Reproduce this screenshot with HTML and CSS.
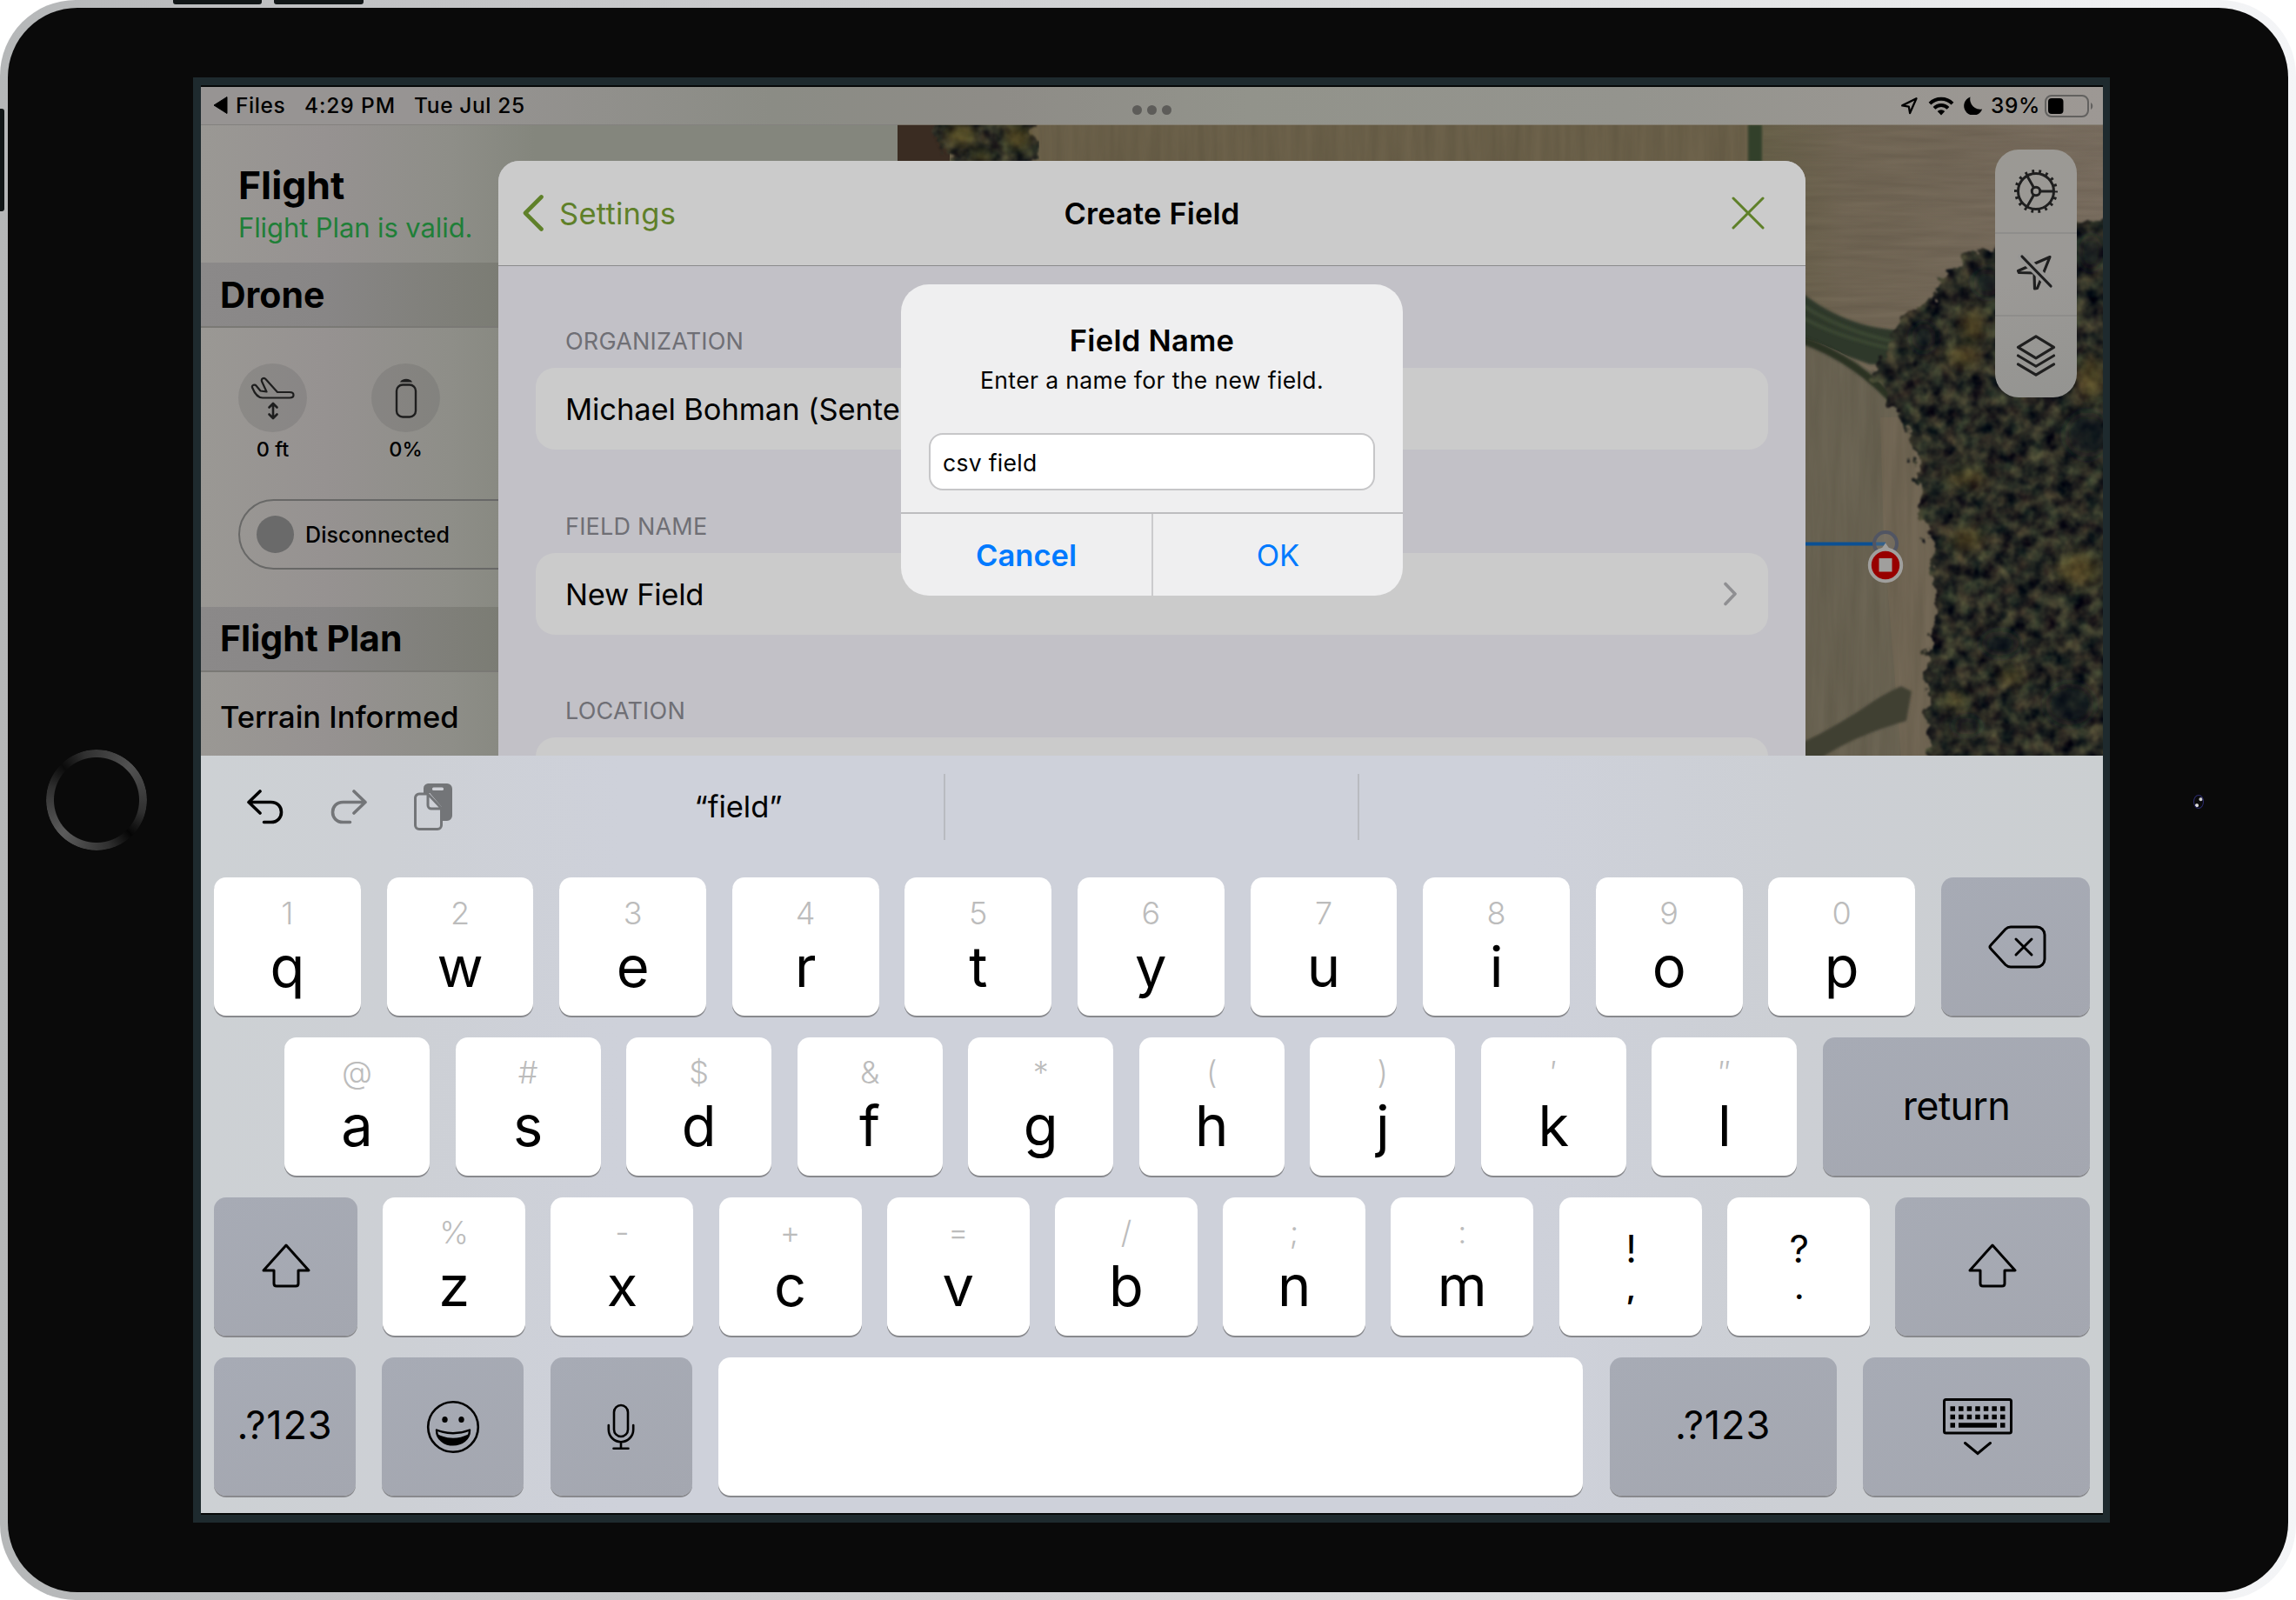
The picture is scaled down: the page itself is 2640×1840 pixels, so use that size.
FILE: index.html
```html
<!DOCTYPE html>
<html lang="en">
<head>
<meta charset="utf-8">
<title>Create Field</title>
<link rel="stylesheet" href="styles.css">
</head>
<body>
<div class="device">
  <i class="hw hw-top-a"></i><i class="hw hw-top-b"></i><i class="hw hw-left"></i>
  <div class="face">
    <div class="home"></div>
    <div class="bezel">
      <main class="screen">
        <header class="status">
          <div class="status-left">
            <svg width="17" height="22" viewBox="0 0 17 22"><path d="M16 1.5v19L1 11z" fill="#000" stroke="#000" stroke-linejoin="round"/></svg>
            <span class="t-files">Files</span><span class="t-time">4:29 PM</span><span class="t-date">Tue Jul 25</span>
          </div>
          <div class="status-dots"><i></i><i></i><i></i></div>
          <div class="status-right">
            <svg width="21" height="21" viewBox="0 0 21 21"><path d="M18.5 2.2 2.2 10.4l7.6 1.2 1.3 7.4z" fill="none" stroke="#000" stroke-width="2.3" stroke-linejoin="round"/></svg>
            <svg width="30" height="22" viewBox="0 0 30 22"><g fill="none" stroke="#000" stroke-width="4"><path d="M2 8.2a18.5 18.5 0 0 1 26 0"/><path d="M7 13.3a11.4 11.4 0 0 1 16 0"/></g><path d="m15 21.5-4.3-4.5a6.2 6.2 0 0 1 8.6 0z"/></svg>
            <svg width="22" height="21" viewBox="0 0 22 21"><path d="M7.5.6a11.6 11.6 0 0 0 13.7 13.8A10.8 10.8 0 1 1 7.5.6z"/></svg>
            <span>39%</span>
            <svg class="batt" width="56" height="26" viewBox="0 0 56 26"><rect x="1" y="1" width="49" height="24" rx="7" fill="none" stroke="#62615f" stroke-width="2"/><rect x="4" y="4" width="17.500" height="18" rx="4"/><path d="M53 9v8c3-1.500 3-6.500 0-8z" fill="#62615f"/></svg>
          </div>
        </header>

        <section class="stage">
          <aside class="sidebar">
            <div class="side-head">
              <h1>Flight</h1>
              <p>Flight Plan is valid.</p>
            </div>
            <h2 class="band band-drone">Drone</h2>
            <div class="gauges">
              <div class="gauge">
                <span class="disc">
                  <svg width="52" height="50" viewBox="0 0 52 50" fill="none" stroke="#1e1e1e" stroke-width="2.200" stroke-linejoin="round" stroke-linecap="round"><path d="M2 12.500c-.8-2.500 3-4 4.500-2l5 6 7 1-5.500-12c-1-3 2.500-5 4.500-2.500l13.500 15H45c6 0 6 6.500 0 6.500H14c-5 0-9-4.500-12-12z"/><path d="M26 32v15M21.500 35.500 26 31l4.500 4.500M21.500 43.500 26 48l4.500-4.500" stroke-width="2.600"/></svg>
                </span>
                <span>0 ft</span>
              </div>
              <div class="gauge">
                <span class="disc">
                  <svg width="26" height="46" viewBox="0 0 26 46"><path d="M6 4.500C8 -.500 18 -.500 20 4.500z" fill="#1e1e1e"/><rect x="2" y="7.500" width="22" height="37" rx="7" fill="none" stroke="#1e1e1e" stroke-width="2.400"/></svg>
                </span>
                <span>0%</span>
              </div>
            </div>
            <div class="pill"><i></i><span>Disconnected</span></div>
            <h2 class="band band-plan">Flight Plan</h2>
            <p class="terrain">Terrain Informed</p>
          </aside>

          <div class="map">
            <svg class="imagery" viewBox="1032 143 1386 726" width="1386" height="726">
              <defs>
                <filter id="canopy" x="-5%" y="-5%" width="110%" height="110%" color-interpolation-filters="sRGB">
                  <feTurbulence type="fractalNoise" baseFrequency=".06" numOctaves="4" seed="8" result="n"/>
                  <feColorMatrix in="n" values=".5 .1 0 0 -.145  .48 .02 .06 0 -.12  .26 .02 .04 0 -.025  0 0 0 0 1" result="c"/>
                  <feTurbulence type="fractalNoise" baseFrequency=".07" numOctaves="3" seed="3" result="m"/>
                  <feDisplacementMap in="SourceGraphic" in2="m" scale="26" xChannelSelector="R" yChannelSelector="G" result="shape"/>
                  <feComposite in="c" in2="shape" operator="in" result="t"/>
                  <feGaussianBlur in="t" stdDeviation="1.200"/>
                </filter>
                <filter id="soil" x="0" y="0" width="100%" height="100%" color-interpolation-filters="sRGB">
                  <feTurbulence type="fractalNoise" baseFrequency=".01 .12" numOctaves="3" seed="5"/>
                  <feColorMatrix values="0 0 0 0 .2  0 0 0 0 .17  0 0 0 0 .13  .25 0 0 0 -.06"/>
                  <feComposite in2="SourceGraphic" operator="in"/>
                </filter>
                <filter id="rows" x="0" y="0" width="100%" height="100%" color-interpolation-filters="sRGB">
                  <feTurbulence type="fractalNoise" baseFrequency=".08 .007" numOctaves="3" seed="9"/>
                  <feColorMatrix values="0 0 0 0 .2  0 0 0 0 .19  0 0 0 0 .13  .28 0 0 0 -.07"/>
                  <feComposite in2="SourceGraphic" operator="in"/>
                </filter>
                <filter id="soft" x="-50%" y="-50%" width="200%" height="200%"><feGaussianBlur stdDeviation="7"/></filter>
                <filter id="edge" x="-10%" y="-10%" width="120%" height="120%"><feGaussianBlur stdDeviation="1.500"/></filter>
                <linearGradient id="tan" x1="0" x2="1"><stop offset="0" stop-color="#686149"/><stop offset=".25" stop-color="#726755"/><stop offset="1" stop-color="#7b6f61"/></linearGradient>
              </defs>
              <rect x="1032" y="143" width="1386" height="726" fill="#6d624b"/>
              <rect x="1185" y="143" width="830" height="60" filter="url(#rows)"/>
              <rect x="1032" y="143" width="60" height="60" fill="#3a2c22"/>
              <path d="M1074 120h115v90h-85c-4-24-30-40-30-90z" filter="url(#canopy)"/>
              <g fill="#6b5c24" opacity=".6" filter="url(#soft)"><ellipse cx="1105" cy="155" rx="18" ry="12"/><ellipse cx="1170" cy="158" rx="14" ry="14"/><ellipse cx="1128" cy="180" rx="10" ry="8"/></g>
              <rect x="2018" y="143" width="400" height="300" fill="url(#tan)"/>
              <rect x="2028" y="143" width="390" height="245" filter="url(#soil)"/>
              <rect x="2010" y="143" width="16" height="60" fill="#33402a" filter="url(#edge)"/>
              <path d="M2070 335c40 32 80 46 140 46v38h-60l-80-28z" fill="#2f3829" filter="url(#edge)"/>
              <path d="M2074 352c40 26 80 36 124 46M2074 366c40 22 80 30 122 40" fill="none" stroke="#3b4631" stroke-width="4" filter="url(#edge)"/>
              <path d="M2070 388c50 12 88 42 124 74 24 30 30 70 46 108v299h-170z" fill="#6c6554"/>
              <path d="M2162 480l4 140 12 150 8 99h60v-110l10-100-14-90-26-90z" fill="#766956" opacity=".8"/>
              <path d="M2070 388c50 12 88 42 124 74 24 30 30 70 46 108v299h-170z" filter="url(#rows)"/>
              <path d="M2070 390c50 18 82 44 110 74" fill="none" stroke="#2b3124" stroke-width="9" filter="url(#edge)"/>
              <path d="M2070 855c30-14 60-32 80-46q18-12 36-20l12 6-6 34c-20 6-60 18-97 42h-25z" fill="#403f33" filter="url(#edge)"/>
              <path d="M2176 392l12-32 34-14 18-36 28-20 104-6 10-32h66v640h-222l-10-60-2-64 12-70-6-70-14-60-10-70-44-66z" filter="url(#canopy)"/>
              <g fill="#8a702c" opacity=".4" filter="url(#soft)"><ellipse cx="2268" cy="375" rx="14" ry="18"/><ellipse cx="2258" cy="410" rx="20" ry="12"/><ellipse cx="2404" cy="435" rx="16" ry="24"/><ellipse cx="2312" cy="778" rx="14" ry="9"/><ellipse cx="2248" cy="805" rx="14" ry="8"/><ellipse cx="2390" cy="655" rx="24" ry="18"/><ellipse cx="2262" cy="550" rx="22" ry="9"/><ellipse cx="2262" cy="620" rx="18" ry="12"/></g>
              <g fill="#0c151c" opacity=".6" filter="url(#soft)"><ellipse cx="2400" cy="500" rx="26" ry="26"/><ellipse cx="2212" cy="388" rx="14" ry="16"/><ellipse cx="2285" cy="325" rx="16" ry="16"/><ellipse cx="2404" cy="290" rx="14" ry="20"/><ellipse cx="2380" cy="810" rx="28" ry="24"/><ellipse cx="2300" cy="740" rx="22" ry="14"/><ellipse cx="2262" cy="835" rx="16" ry="10"/></g>
              <path d="M1032 143h1386" stroke="#8f8b80" stroke-width="1.500"/>
              <path d="M2070 625.500h98" stroke="#0b5093" stroke-width="4"/>
              <circle cx="2168" cy="625" r="13" fill="#85817c" fill-opacity=".35" stroke="#515563" stroke-width="4"/>
              <path d="M2168 624.500l7 10h-14z" fill="#a09f9d"/>
              <circle cx="2168" cy="650" r="18.200" fill="#980000" stroke="#a09f9d" stroke-width="4"/>
              <rect x="2160.500" y="642" width="15" height="15.500" fill="#a09f9d"/>
            </svg>
            <nav class="tools">
              <span><svg width="52" height="52" viewBox="-26 -26 52 52" fill="none" stroke="#1f1f1f" stroke-width="3"><circle r="20.500"/><circle r="23" stroke-width="4" stroke-dasharray="2.800 5.228" stroke-dashoffset="1.400"/><circle r="4.700"/><path d="M5 0h15M-2.500-4.300-10.500-18.200M-2.500 4.300-10.500 18.200"/></svg></span>
              <span><svg width="44" height="44" viewBox="-2 -2 44 44" fill="none" stroke="#1f1f1f" stroke-width="3.200" stroke-linejoin="round" stroke-linecap="round"><path d="M38 1.500 1.500 17.500l1 2 17.500.5.500 18 3-.5z"/><path d="M6 1l34 34" stroke="#989795" stroke-width="10"/><path d="M6 1l33 34"/></svg></span>
              <span><svg width="48" height="50" viewBox="-3 -3 48 51" fill="none" stroke="#1f1f1f" stroke-width="3.200" stroke-linejoin="round" stroke-linecap="round"><path d="M21 0l21 12.700-21 12.700L0 12.700z"/><path d="M0 22.500l21 12.500 21-12.500"/><path d="M0 32.500l21 12.500 21-12.500"/></svg></span>
            </nav>
          </div>

          <section class="sheet">
            <header>
              <a class="back"><svg width="24" height="42" viewBox="0 0 24 42"><path d="M21.500 2.500 3 21l18.500 18.500" fill="none" stroke="#5f8029" stroke-width="4.600" stroke-linecap="round" stroke-linejoin="round"/></svg><span>Settings</span></a>
              <h3>Create Field</h3>
              <svg class="close" width="38" height="38" viewBox="0 0 38 38"><path d="M2 2l34 34M36 2 2 36" stroke="#5f8029" stroke-width="3" stroke-linecap="round"/></svg>
            </header>
            <div class="form">
              <label class="l-org">ORGANIZATION</label>
              <div class="card c-org"><span>Michael Bohman (Sentera)</span></div>
              <label class="l-name">FIELD NAME</label>
              <div class="card c-name"><span>New Field</span><svg width="17" height="28" viewBox="0 0 17 28"><path d="M3 2.500 14 14 3 25.500" fill="none" stroke="#8f8f92" stroke-width="3.600" stroke-linecap="round" stroke-linejoin="round"/></svg></div>
              <label class="l-loc">LOCATION</label>
              <div class="card"></div>
            </div>
          </section>

          <section class="alert">
            <h3>Field Name</h3>
            <p>Enter a name for the new field.</p>
            <div class="field">csv field</div>
            <div class="actions"><b>Cancel</b><span>OK</span></div>
          </section>
        </section>

        <section class="keyboard">
          <div class="suggest">
            <div class="edit">
              <svg width="42" height="40" viewBox="0 0 42 40" fill="none" stroke="#000" stroke-width="3.600" stroke-linecap="round" stroke-linejoin="round"><path d="M15 2 2 14.500 15 27M2.500 14.500h25c16 0 16 23 0 23h-8"/></svg>
              <svg width="42" height="40" viewBox="0 0 42 40" fill="none" stroke="#737578" stroke-width="3.600" stroke-linecap="round" stroke-linejoin="round"><path d="M27 2l13 12.500L27 27M39.500 14.500h-25c-16 0-16 23 0 23h8"/></svg>
              <svg width="44" height="54" viewBox="0 0 44 54"><path d="M16 0h22a6 6 0 0 1 6 6v31a6 6 0 0 1-6 6h-6V27L18 11h-7V6a6 6 0 0 1 5-6z" fill="#737578"/><rect x="21" y="4.500" width="13" height="3.500" rx="1.500" fill="#cfd1d7"/><path d="M18 11v12.500a5 5 0 0 0 5 5h9z" fill="#cfd1d7"/><path d="M15 12H6a4.500 4.500 0 0 0-4.500 4.500V48A4.500 4.500 0 0 0 6 52.500h21a4.500 4.500 0 0 0 4.500-4.500V28.500L16 12v13a4 4 0 0 0 4 4h11.500" fill="none" stroke="#737578" stroke-width="3"/></svg>
            </div>
            <span class="word">“field”</span><span></span><span></span>
          </div>

          <div class="keys row1">
            <div class="key"><small>1</small><b>q</b></div><div class="key"><small>2</small><b>w</b></div><div class="key"><small>3</small><b>e</b></div><div class="key"><small>4</small><b>r</b></div><div class="key"><small>5</small><b>t</b></div><div class="key"><small>6</small><b>y</b></div><div class="key"><small>7</small><b>u</b></div><div class="key"><small>8</small><b>i</b></div><div class="key"><small>9</small><b>o</b></div><div class="key"><small>0</small><b>p</b></div>
            <div class="key dark delete"><svg width="68" height="50" viewBox="0 0 68 50" fill="none" stroke="#000" stroke-width="3" stroke-linejoin="round" stroke-linecap="round"><path d="M26 2h30a9 9 0 0 1 9 9v28a9 9 0 0 1-9 9H26q-3.500 0-6-2.500L3 27q-2-2 0-4L20 4.500Q22.500 2 26 2z"/><path d="M32 16l18 18M50 16 32 34"/></svg></div>
          </div>
          <div class="keys row2">
            <div class="key"><small>@</small><b>a</b></div><div class="key"><small>#</small><b>s</b></div><div class="key"><small>$</small><b>d</b></div><div class="key"><small>&amp;</small><b>f</b></div><div class="key"><small>*</small><b>g</b></div><div class="key"><small>(</small><b>h</b></div><div class="key"><small>)</small><b>j</b></div><div class="key"><small>′</small><b>k</b></div><div class="key"><small>″</small><b>l</b></div>
            <div class="key dark return"><span>return</span></div>
          </div>
          <div class="keys row3">
            <div class="key dark shift-l"><svg width="58" height="52" viewBox="0 0 58 52"><path d="M29 3 55 32H43v15q0 3-3 3H18q-3 0-3-3V32H3z" fill="none" stroke="#000" stroke-width="3" stroke-linejoin="round"/></svg></div>
            <div class="key"><small>%</small><b>z</b></div><div class="key"><small>-</small><b>x</b></div><div class="key"><small>+</small><b>c</b></div><div class="key"><small>=</small><b>v</b></div><div class="key"><small>/</small><b>b</b></div><div class="key"><small>;</small><b>n</b></div><div class="key"><small>:</small><b>m</b></div>
            <div class="key pair"><em>!</em><em>,</em></div><div class="key pair"><em>?</em><em>.</em></div>
            <div class="key dark shift-r"><svg width="58" height="52" viewBox="0 0 58 52"><path d="M29 3 55 32H43v15q0 3-3 3H18q-3 0-3-3V32H3z" fill="none" stroke="#000" stroke-width="3" stroke-linejoin="round"/></svg></div>
          </div>
          <div class="keys row4">
            <div class="key dark num"><span>.?123</span></div>
            <div class="key dark"><svg width="62" height="62" viewBox="-31 -31 62 62"><circle r="28.800" fill="none" stroke="#000" stroke-width="2.600"/><ellipse cx="-9.500" cy="-8.500" rx="3.200" ry="3.600"/><ellipse cx="9.500" cy="-8.500" rx="3.200" ry="3.600"/><path d="M-19 3.500Q0 11 19 3.500C19 26-19 26-19 3.500z" fill="#a6abb5" stroke="#000" stroke-width="2.400" stroke-linejoin="round"/><path d="M-17.500 8.500Q0 17 17.500 8.500C14 25-14 25-17.500 8.500z"/></svg></div>
            <div class="key dark"><svg width="32" height="54" viewBox="0 0 32 54" fill="none" stroke="#000" stroke-width="2.600" stroke-linecap="round"><rect x="8" y="2" width="16" height="36" rx="8"/><path d="M1.800 25v5a14.200 14.200 0 0 0 28.400 0v-5M16 44.500V51M7.500 51.800h17"/></svg></div>
            <div class="key space"></div>
            <div class="key dark num num-r"><span>.?123</span></div>
            <div class="key dark hide"><svg width="80" height="66" viewBox="0 0 80 66"><rect x="1.500" y="1.500" width="77" height="38.500" rx="2" fill="none" stroke="#000" stroke-width="3"/><path d="M8.500 12h63M8.500 21.500h63" stroke="#000" stroke-width="5.600" stroke-dasharray="5.500 4.080"/><path d="M8.500 31h5.500M18 31h44M66 31h5.500" stroke="#000" stroke-width="5.600"/><path d="M25.500 51.500 40 63.500l14.500-12" fill="none" stroke="#000" stroke-width="3" stroke-linecap="round"/></svg></div>
          </div>
        </section>
      </main>
    </div>
    <div class="camera"></div>
  </div>
</div>
</body>
</html>
```
FILE: styles.css
```css
* { box-sizing: border-box; }

body {
  margin: 0;
  background: #fff;
  font-family: Inter, "Liberation Sans", sans-serif;
  color: #000;
}

h1, h2, h3, p { margin: 0; }
svg { display: block; flex: none; }

/* Device shell */
.device {
  position: relative;
  width: 2640px;
  height: 1840px;
  padding: 9px;
  border-radius: 87px;
  overflow: hidden;
  background: linear-gradient(90deg, #b5b7b8 0, #bfc0c2 12%, #d0d1d3 45%, #e6e7e8 80%, #f4f5f7 100%);
}
.face {
  width: 2622px;
  height: 1822px;
  border-radius: 80px;
  background: #0a0a0a;
  display: flex;
  align-items: flex-start;
}
.hw { position: absolute; background: #111617; }
.hw-top-a { left: 199px; top: 0; width: 102px; height: 5px; border-radius: 0 0 3px 3px; }
.hw-top-b { left: 315px; top: 0; width: 103px; height: 5px; border-radius: 0 0 3px 3px; }
.hw-left { left: 0; top: 125px; width: 5px; height: 118px; border-radius: 0 3px 3px 0; }

.home {
  width: 116px;
  height: 116px;
  margin: 853px 53px 0 44px;
  border-radius: 50%;
  background: conic-gradient(from -45deg, #0a0a0a, #303030 30deg, #525252 90deg, #303030 150deg, #050505 180deg, #303030 210deg, #5c5c5c 270deg, #303030 330deg, #0a0a0a);
  -webkit-mask: radial-gradient(circle, transparent 48.500px, #000 49.500px);
  mask: radial-gradient(circle, transparent 48.500px, #000 49.500px);
}
.bezel {
  margin-top: 80px;
  width: 2204px;
  height: 1662px;
  padding: 9px 9px;
  background: #1e2a2e;
}
.screen {
  width: 2187px;
  height: 1644px;
  border: solid #060808;
  border-width: 2px 0;
  display: grid;
  grid-template-rows: 43px 726px 871px;
  overflow: hidden;
}
.camera {
  width: 12px;
  height: 16px;
  margin: 905px 0 0 96px;
  border-radius: 50%;
  border: 1.500px solid #2c2c70;
  background: radial-gradient(circle at 75% 30%, #ccc 0 1.500px, transparent 2.500px), radial-gradient(circle at 30% 80%, #ddd 0 1.500px, transparent 2.500px);
}

/* Status bar */
.status {
  display: grid;
  grid-template-columns: 1fr 45px 1fr;
  background: linear-gradient(90deg, #979493 0, #979493 12%, #8b8c85 30%, #8e8c87 42%, #92938b 55%, #94948e 75%, #9d9894 100%);
  font-size: 24.500px;
  line-height: 42px;
  font-weight: 500;
}
.status-left { display: flex; align-items: center; padding: 0 0 2px 14px; white-space: nowrap; letter-spacing: .6px; }
.t-files { margin-left: 9px; width: 79px; }
.t-time { width: 126px; letter-spacing: .9px; }
.status-dots { display: flex; gap: 6px; padding-top: 21px; }
.status-dots i { width: 11px; height: 11px; border-radius: 50%; background: #5d5c59; }
.status-right { display: flex; align-items: center; justify-content: flex-end; padding: 0 11px 1px 0; }
.status-right svg { margin-right: 11px; }
.status-right span { letter-spacing: .6px; margin: 0 5px 1px -2px; }
.status-right .batt { margin-right: 0; }

/* Content under the sheet */
.stage { position: relative; display: flex; overflow: hidden; }
.sidebar {
  width: 801px;
  background: linear-gradient(90deg, #9a9894 0, #969291 18%, #8e8e88 36%, #84867d 48%, #84867d 100%);
  border-top: 1.500px solid #83817e;
}
.side-head { height: 158px; padding: 40px 0 0 43px; }
.side-head h1 { font-size: 44.500px; line-height: 58px; font-weight: 700; letter-spacing: 0; }
.side-head p { padding-top: 1px; font-size: 31px; line-height: 38px; color: #1f7f38; letter-spacing: -.1px; }
.band {
  padding-left: 22px;
  font-size: 41px;
  font-weight: 700;
  letter-spacing: 0;
  background: linear-gradient(90deg, #8b8989 0, #888686 18%, #7f7f79 36%, #787a70 48%);
  border-bottom: 2px solid #7a7975;
}
.band-drone { height: 75px; line-height: 75px; }
.band-plan { height: 75px; line-height: 72px; }
.gauges { display: flex; gap: 74px; padding: 41px 0 0 43px; }
.gauge { width: 79px; display: flex; flex-direction: column; align-items: center; font-size: 23.500px; line-height: 40px; white-space: nowrap; }
.gauge > span:last-child { font-weight: 450; }
.disc { width: 79px; height: 79px; border-radius: 50%; background: rgba(90, 90, 92, .22); display: flex; align-items: center; justify-content: center; }
.pill {
  margin: 37px 0 43px 43px;
  height: 81px;
  border: 2px solid #686867;
  border-radius: 41px;
  display: flex;
  align-items: center;
  gap: 13px;
  padding-left: 19px;
  font-size: 25px;
  letter-spacing: .1px;
  font-weight: 450;
}
.pill i { width: 43px; height: 43px; border-radius: 50%; background: #6a6a6a; }
.terrain { padding: 26px 0 0 22px; font-size: 34.500px; line-height: 52px; font-weight: 500; letter-spacing: 0; }

.map { position: relative; width: 1386px; }
.tools {
  position: absolute;
  left: 1262px;
  top: 29px;
  width: 94px;
  height: 285px;
  border-radius: 27px;
  background: linear-gradient(160deg, #9b9994, #9b9996 50%, #949491);
  display: grid;
  grid-template-rows: repeat(3, 1fr);
}
.tools span { display: flex; align-items: center; justify-content: center; }
.tools span + span { border-top: 2px solid #8e8d8b; padding: 0 0 3px; }
.tools span:nth-child(2) { padding-right: 4px; }

/* Create Field sheet */
.sheet {
  position: absolute;
  left: 342px;
  top: 42px;
  width: 1503px;
  height: 700px;
  border-radius: 24px 24px 0 0;
  background: #c2c1c7;
  overflow: hidden;
}
.sheet header {
  height: 121px;
  background: #cbcbcb;
  border-bottom: 1.500px solid #8a8a8c;
  display: grid;
  grid-template-columns: 1fr auto 1fr;
  align-items: center;
  padding: 0 47px 0 28px;
  font-size: 34.500px;
}
.sheet header h3 { font-size: 34.500px; font-weight: 600; letter-spacing: .15px; margin-left: 19px; }
.back { display: flex; align-items: center; gap: 18px; color: #5f8029; letter-spacing: .25px; }
.close { justify-self: end; }
.form { padding: 0 43px; }
.form label { display: block; padding-left: 34px; font-size: 27px; line-height: 36px; color: #6f6f75; letter-spacing: .2px; }
.form .l-org { margin-top: 69px; }
.form .l-name, .form .l-loc { margin-top: 70px; }
.card {
  margin-top: 12px;
  height: 94px;
  border-radius: 22px;
  background: #cbcbcb;
  padding: 0 35px 0 34px;
  display: flex;
  align-items: center;
  justify-content: space-between;
  font-size: 34.500px;
  letter-spacing: -.1px;
}
.form .c-org { margin-bottom: 71px; }
.form .c-name { margin-bottom: 70px; letter-spacing: -.3px; }

/* Alert */
.alert {
  position: absolute;
  left: 805px;
  top: 184px;
  width: 577px;
  height: 358px;
  border-radius: 32px;
  background: #efeff0;
  overflow: hidden;
  text-align: center;
}
.alert h3 { margin-top: 43px; font-size: 34.500px; line-height: 44px; font-weight: 600; letter-spacing: .3px; }
.alert p { font-size: 26.500px; line-height: 46px; letter-spacing: .38px; }
.field {
  margin: 38px 32px 25px;
  height: 66px;
  border: 2px solid #c6c6c8;
  border-radius: 16px;
  background: #fff;
  padding-left: 14px;
  font-size: 26.500px;
  letter-spacing: .3px;
  line-height: 65px;
  text-align: left;
}
.actions { display: grid; grid-template-columns: 290px 1fr; height: 96px; border-top: 2px solid #bdbdbf; color: #007aff; font-size: 34.500px; line-height: 95px; }
.actions b { font-weight: 600; border-right: 2px solid #cbcbcd; }

/* Keyboard */
.keyboard {
  background: linear-gradient(90deg, #cdd1d4 0, #cdd0d5 10%, #ced1da 22%, #ced1da 70%, #cccfd4 84%, #cbcfd1 100%);
  padding: 0 15px;
}
.suggest { height: 140px; display: grid; grid-template-columns: 366px 475px 476px 1fr; padding-top: 21px; }
.suggest > span { height: 76px; text-align: center; font-size: 34.500px; line-height: 75px; }
.suggest .word { padding-left: 1px; }
.suggest > span:nth-child(2), .suggest > span:nth-child(3) { border-right: 2px solid #b9bbc0; }
.edit { display: flex; align-items: center; height: 76px; padding-left: 38px; gap: 54px; }

.keys { display: flex; justify-content: space-between; margin-bottom: 25px; }
.key {
  height: 159px;
  border-radius: 14px;
  background: #fff;
  box-shadow: 0 2px 0 #88898d;
  padding-top: 20px;
  display: flex;
  flex-direction: column;
  align-items: center;
}
.key small { font-size: 36px; line-height: 40px; font-weight: 300; color: #bcbcbc; }
.key b { font-size: 65px; line-height: 83px; font-weight: 370; }
.key.dark {
  background: linear-gradient(160deg, #a7abb5, #a4a7b0);
  padding: 0;
  justify-content: center;
  font-size: 45px;
  line-height: 60px;
}
.row1 .key { width: 168.800px; }
.row1 .key:not(.dark) { padding-top: 21px; }
.row1 .delete { width: 171px; padding: 1px 0 0 5px; }
.row2 { padding-left: 81px; }
.row2 .key { width: 167px; }
.row2 .return { width: 307px; letter-spacing: -.8px; padding-bottom: 2px; }
.row3 .key { width: 164px; }
.row3 .shift-l { width: 165px; padding: 0 0 3px 1px; }
.row3 .shift-r { width: 224px; padding: 0 0 3px 1px; }
.row4 .key { width: 163px; }
.row4 .space { width: 994px; }
.row4 .num { letter-spacing: .9px; padding-bottom: 3px; }
.row4 .num-r, .row4 .hide { width: 261px; }
.row4 .hide { padding-left: 3px; }
.key.pair { padding: 38px 0 0 2px; }
.key.pair em { font-style: normal; font-weight: 370; font-size: 44px; line-height: 42px; }
.key.pair em + em { font-size: 33px; font-weight: 700; padding-top: 4px; }
```
